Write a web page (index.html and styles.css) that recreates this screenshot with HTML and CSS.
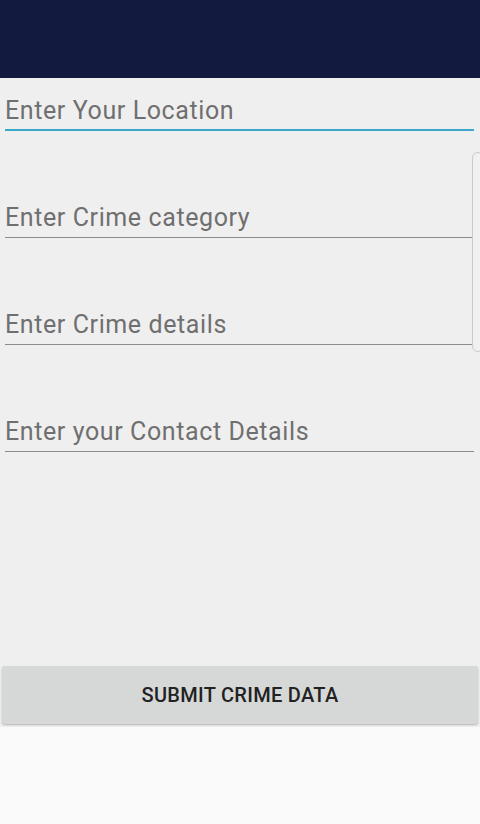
FILE: index.html
```html
<!DOCTYPE html>
<html>
<head>
<meta charset="utf-8">
<link rel="stylesheet" href="styles.css">
</head>
<body>
<div class="app">
  <header class="appbar"></header>
  <main class="content">
    <form class="form">
      <div class="field focused">Enter Your Location</div>
      <div class="field">Enter Crime category</div>
      <div class="field">Enter Crime details</div>
      <div class="field">Enter your Contact Details</div>
    </form>
    <button class="submit" type="button">SUBMIT CRIME DATA</button>
    <div class="edge"></div>
  </main>
  <div class="bottom"></div>
</div>
</body>
</html>
```
FILE: styles.css
```css
* { box-sizing: border-box; }
html, body { margin: 0; padding: 0; }
body {
  width: 480px;
  height: 824px;
  overflow: hidden;
  font-family: Roboto, "Liberation Sans", sans-serif;
  background: #fafafa;
}
.app {
  display: flex;
  flex-direction: column;
  height: 824px;
}
.appbar {
  height: 78px;
  background: #121b3f;
  flex: none;
}
.content {
  position: relative;
  background: #efefef;
  height: 649px;
  display: flex;
  flex-direction: column;
  padding: 18px 0 3px;
}
.form {
  display: flex;
  flex-direction: column;
  gap: 72px;
  padding: 0 6px 0 5px;
}
.field {
  height: 35px;
  font-size: 25px;
  letter-spacing: 0.6px;
  line-height: 28px;
  padding: 1px 0 4px;
  color: #6f6f6f;
  border-bottom: 1.5px solid #8c8c8c;
}
.field.focused {
  border-bottom: 2px solid #3ba8c9;
}
.submit {
  margin: auto 2px 0;
  height: 58px;
  border: none;
  border-radius: 3px;
  background: #d6d8d8;
  box-shadow: 0 1px 2px rgba(0,0,0,0.25);
  font-family: Roboto, "Liberation Sans", sans-serif;
  font-size: 20px;
  font-weight: 500;
  color: #222222;
  letter-spacing: 0.3px;
  padding: 0;
}
.edge {
  position: absolute;
  right: -4px;
  top: 74px;
  width: 12px;
  height: 200px;
  border: 1.5px solid #c9c9c9;
  border-radius: 10px;
  background: #f1f1f1;
}
.bottom {
  flex: 1;
  background: #fafafa;
}
```
